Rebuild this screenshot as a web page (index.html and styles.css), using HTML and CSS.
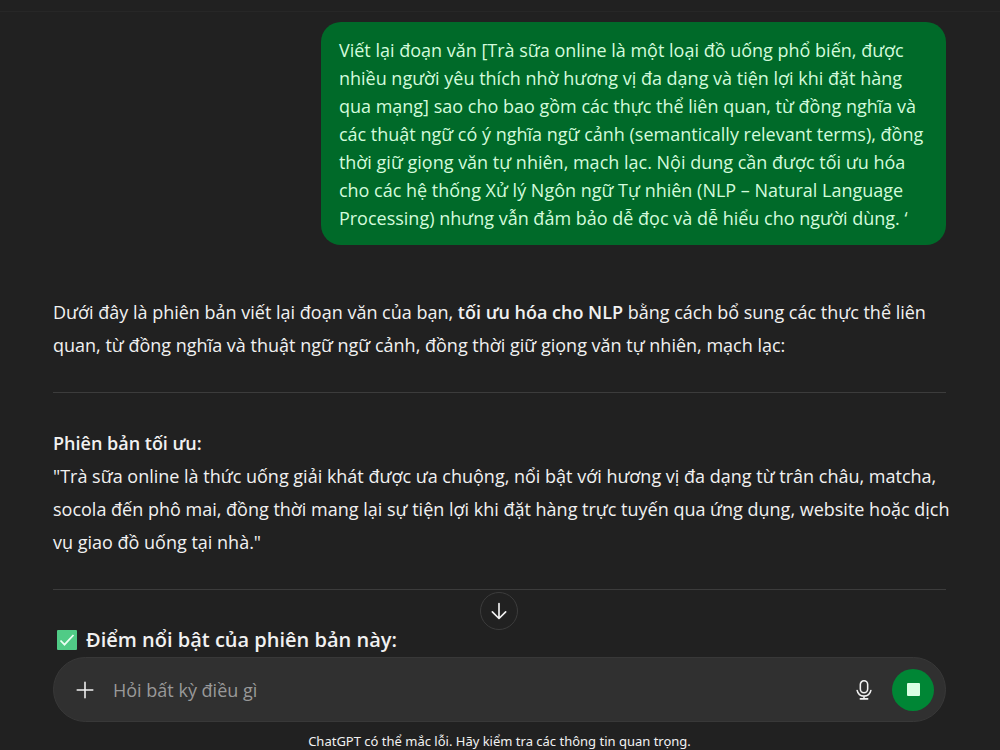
FILE: index.html
```html
<!DOCTYPE html>
<html lang="vi">
<head>
<meta charset="utf-8">
<meta name="viewport" content="width=device-width, initial-scale=1">
<title>ChatGPT</title>
<link rel="stylesheet" href="styles.css">
</head>
<body>
<header class="topbar"></header>
<main class="thread">
  <div class="user-message">Viết lại đoạn văn [Trà sữa online là một loại đồ uống phổ biến, được<br>nhiều người yêu thích nhờ hương vị đa dạng và tiện lợi khi đặt hàng<br>qua mạng] sao cho bao gồm các thực thể liên quan, từ đồng nghĩa và<br>các thuật ngữ có ý nghĩa ngữ cảnh (semantically relevant terms), đồng<br>thời giữ giọng văn tự nhiên, mạch lạc. Nội dung cần được tối ưu hóa<br>cho các hệ thống Xử lý Ngôn ngữ Tự nhiên (NLP – Natural Language<br>Processing) nhưng vẫn đảm bảo dễ đọc và dễ hiểu cho người dùng. ‘</div>
  <article class="reply">
    <p>Dưới đây là phiên bản viết lại đoạn văn của bạn, <strong>tối ưu hóa cho NLP</strong> bằng cách bổ sung các thực thể liên<br>quan, từ đồng nghĩa và thuật ngữ ngữ cảnh, đồng thời giữ giọng văn tự nhiên, mạch lạc:</p>
    <hr>
    <p><strong>Phiên bản tối ưu:</strong><br>"Trà sữa online là thức uống giải khát được ưa chuộng, nổi bật với hương vị đa dạng từ trân châu, matcha,<br>socola đến phô mai, đồng thời mang lại sự tiện lợi khi đặt hàng trực tuyến qua ứng dụng, website hoặc dịch<br>vụ giao đồ uống tại nhà."</p>
    <hr>
    <h3 class="highlights">
      <svg class="check" viewBox="0 0 22 22" aria-hidden="true"><rect x="1" y="1" width="20" height="20" rx="1" fill="#50cb86"/><path d="M4.500 11.500l4 4.200 9-9.700" fill="none" stroke="#e9fff2" stroke-width="1.800"/></svg>
      Điểm nổi bật của phiên bản này:
    </h3>
  </article>
</main>
<footer class="dock">
  <button class="scroll-down" type="button" aria-label="Cuộn xuống">
    <svg viewBox="0 0 24 24" aria-hidden="true"><path d="M12 3v18M4 13l8 8 8-8"/></svg>
  </button>
  <form class="composer">
    <button class="icon-button" type="button" aria-label="Thêm">
      <svg viewBox="0 0 24 24" aria-hidden="true"><path d="M12 3.500v17M3.500 12h17"/></svg>
    </button>
    <input class="prompt" type="text" placeholder="Hỏi bất kỳ điều gì" aria-label="Hỏi bất kỳ điều gì">
    <button class="icon-button" type="button" aria-label="Đọc chính tả">
      <svg viewBox="0 0 24 24" aria-hidden="true"><rect x="8" y="2" width="8" height="13" rx="4"/><path d="M4.500 12.500c.8 3.800 3.600 6.200 7.500 6.200s6.700-2.400 7.500-6.200M12 18.700v3M8 21.700h8"/></svg>
    </button>
    <button class="stop" type="button" aria-label="Dừng"><span class="stop-mark"></span></button>
  </form>
  <p class="disclaimer">ChatGPT có thể mắc lỗi. Hãy kiểm tra các thông tin quan trọng.</p>
</footer>
</body>
</html>
```

FILE: styles.css
```css
* {
  box-sizing: border-box;
}

body {
  margin: 0;
  height: 100vh;
  display: flex;
  flex-direction: column;
  overflow: hidden;
  background: #212121;
  color: #f1f1f1;
  font-family: "Open Sans", "Noto Sans", sans-serif;
  font-size: 18px;
}

button {
  padding: 0;
  border: 0;
  background: none;
  color: inherit;
}

.topbar {
  flex: none;
  height: 12px;
  border-bottom: 1px solid #272727;
}

.thread {
  flex: 1;
  min-height: 0;
  overflow: hidden;
  display: flex;
  flex-direction: column;
  gap: 51px;
  padding: 10px 54px 0 53px;
}

.user-message {
  align-self: flex-end;
  min-width: 70%;
  padding: 14px 18px 13px;
  border-radius: 20px;
  background: #006a29;
  color: #d3fbdc;
  line-height: 28px;
  white-space: nowrap;
}

.reply {
  line-height: 33px;
  white-space: nowrap;
}

.reply p {
  margin: 0;
}

.reply strong {
  font-weight: 600;
}

.reply hr {
  height: 1px;
  margin: 30px 0 34px;
  border: 0;
  background: #3c3c3c;
}

.highlights {
  display: flex;
  align-items: center;
  gap: 8px;
  margin: 0;
  padding-left: 3px;
  font-size: 20px;
  font-weight: 600;
  line-height: 32px;
}

.check {
  width: 22px;
  height: 22px;
}

.dock {
  position: relative;
  flex: none;
  padding: 0 54px 0 53px;
}

.scroll-down {
  position: absolute;
  left: 50%;
  bottom: 120px;
  display: grid;
  place-items: center;
  width: 38px;
  height: 38px;
  margin-left: -20px;
  border: 1px solid #3c3c3c;
  border-radius: 50%;
  background: #212121;
}

.scroll-down svg,
.icon-button svg {
  width: 22px;
  height: 22px;
  fill: none;
  stroke: #f1f1f1;
  stroke-width: 2;
  stroke-linecap: round;
  stroke-linejoin: round;
}

.scroll-down svg {
  width: 20px;
  height: 20px;
}

.icon-button svg {
  stroke-width: 1.7;
}

.composer {
  display: flex;
  align-items: center;
  height: 65px;
  padding: 0 11px 0 19px;
  border: 1px solid #383838;
  border-radius: 33px;
  background: #303030;
}

.icon-button {
  display: grid;
  place-items: center;
  width: 24px;
  height: 32px;
}

.prompt {
  flex: 1;
  min-width: 0;
  margin: 0 16px;
  padding: 0;
  border: 0;
  outline: 0;
  background: none;
  color: #f1f1f1;
  font: inherit;
}

.prompt::placeholder {
  color: #999;
  opacity: 1;
}

.stop {
  display: grid;
  place-items: center;
  width: 42px;
  height: 42px;
  margin-left: 16px;
  border-radius: 50%;
  background: #008635;
}

.stop-mark {
  width: 13px;
  height: 13px;
  border-radius: 1px;
  background: #d9ffe4;
}

.disclaimer {
  margin: 0;
  padding-top: 10px;
  font-family: "Noto Sans", "Open Sans", sans-serif;
  font-size: 13px;
  line-height: 18px;
  text-align: center;
}
```
